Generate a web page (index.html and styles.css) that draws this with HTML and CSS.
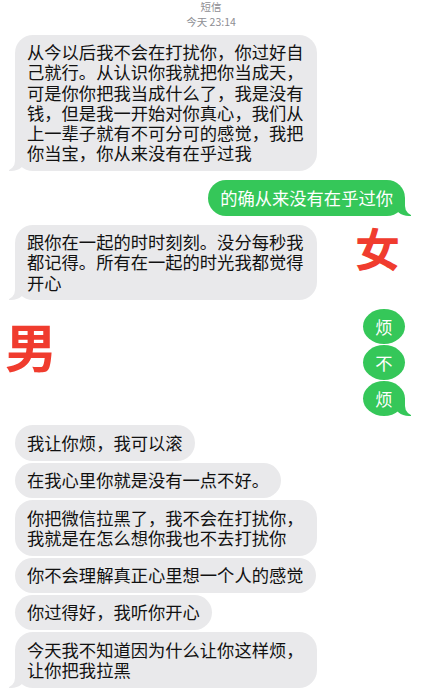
FILE: index.html
```html
<!DOCTYPE html>
<html lang="zh-CN">
<head>
<meta charset="UTF-8">
<meta name="viewport" content="width=device-width, initial-scale=1.0">
<title>短信</title>
<link rel="stylesheet" href="styles.css">
</head>
<body>
<div class="chat">
    <div class="header">
        <div class="header-name">短信</div>
        <div class="header-time">今天 23:14</div>
    </div>

    <div class="group">
        <div class="bubble them tail">从今以后我不会在打扰你，你过好自己就行。从认识你我就把你当成天，可是你你把我当成什么了，我是没有钱，但是我一开始对你真心，我们从上一辈子就有不可分可的感觉，我把你当宝，你从来没有在乎过我</div>
    </div>

    <div class="group">
        <div class="bubble me tail">的确从来没有在乎过你</div>
    </div>

    <div class="group">
        <div class="bubble them tail">跟你在一起的时时刻刻。没分每秒我都记得。所有在一起的时光我都觉得开心</div>
    </div>

    <div class="group tight">
        <div class="bubble me round">烦</div>
        <div class="bubble me round">不</div>
        <div class="bubble me round tail">烦</div>
    </div>

    <div class="group">
        <div class="bubble them">我让你烦，我可以滚</div>
        <div class="bubble them">在我心里你就是没有一点不好。</div>
        <div class="bubble them">你把微信拉黑了，我不会在打扰你，我就是在怎么想你我也不去打扰你</div>
        <div class="bubble them">你不会理解真正心里想一个人的感觉</div>
        <div class="bubble them">你过得好，我听你开心</div>
        <div class="bubble them tail">今天我不知道因为什么让你这样烦，让你把我拉黑</div>
    </div>

    <div class="stamp stamp-f">女</div>
    <div class="stamp stamp-m">男</div>
</div>
</body>
</html>
```

FILE: styles.css
```css
body {
    margin: 0;
    background-color: #ffffff;
    font-family: "Noto Sans CJK SC", "Noto Sans", sans-serif;
    color: #111;
}
.chat {
    position: relative;
    padding: 0 17px 0 15px;
}
.header {
    text-align: center;
    color: #8e8e93;
    font-size: 10.5px;
    line-height: 13px;
    padding-left: 2px;
    margin-bottom: 7px;
}
.header-time {
    margin-top: 1.5px;
}
.group {
    display: flex;
    flex-direction: column;
    gap: 2px;
    margin-bottom: 9px;
}
.group.tight {
    gap: 1px;
    margin-top: 1px;
}
.bubble {
    position: relative;
    max-width: 278px;
    padding: 7.5px 12px;
    border-radius: 18px;
    font-size: 17.3px;
    line-height: 20.3px;
}
.them {
    align-self: flex-start;
    background-color: #e9e9eb;
    color: #111;
}
.me {
    align-self: flex-end;
    background-color: #35c759;
    color: #ffffff;
}
.round {
    width: 42px;
    height: 35px;
    padding: 0;
    box-sizing: border-box;
    border-radius: 50%;
    display: flex;
    align-items: center;
    justify-content: center;
}

/* bubble tails */
.tail::before,
.tail::after {
    content: "";
    position: absolute;
    bottom: 0;
    height: 18px;
}
.them.tail::before {
    left: -6px;
    width: 17px;
    background-color: #e9e9eb;
    border-bottom-right-radius: 15px 13px;
}
.them.tail::after {
    left: -22px;
    width: 22px;
    background-color: #ffffff;
    border-bottom-right-radius: 10px;
}
.me.tail::before {
    right: -6px;
    width: 17px;
    background-color: #35c759;
    border-bottom-left-radius: 15px 13px;
}
.me.tail::after {
    right: -22px;
    width: 22px;
    background-color: #ffffff;
    border-bottom-left-radius: 10px;
}

/* red labels added on top of the screenshot */
.stamp {
    position: absolute;
    color: #f03c2e;
    font-weight: 700;
    line-height: 1;
}
.stamp-f {
    top: 225px;
    left: 355px;
    font-size: 45px;
}
.stamp-m {
    top: 320px;
    left: 5px;
    font-size: 52px;
}
```
